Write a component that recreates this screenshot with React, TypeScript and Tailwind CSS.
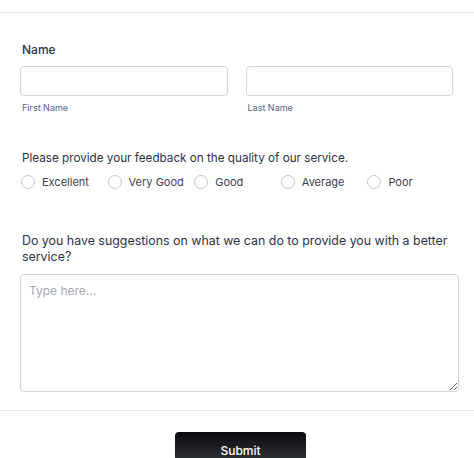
const RATINGS = ['Excellent', 'Very Good', 'Good', 'Average', 'Poor'];

export default function App() {
  return (
    <div className="w-[474px] h-[458px] overflow-hidden bg-white text-[#2c3345] font-['Inter','Liberation_Sans',sans-serif]">
      <div className="h-[12px]" />
      <div className="border-t border-[#e6e8ec]" />

      <div className="pl-[20px] pr-[15px]">
        {/* Name */}
        <div className="pt-[28px]">
          <div className="pl-[2px] text-[12px] font-medium leading-[18px]">Name</div>
          <div className="mt-[7px] flex gap-[18px] pr-[6px]">
            <div className="flex-1">
              <input className="w-full h-[30px] rounded-[4px] border border-[#d3d6dc] bg-white px-2 text-[13px] outline-none" />
              <div className="mt-[6px] pl-[2px] text-[9px] leading-[12px] text-[#57647e]">First Name</div>
            </div>
            <div className="flex-1">
              <input className="w-full h-[30px] rounded-[4px] border border-[#d3d6dc] bg-white px-2 text-[13px] outline-none" />
              <div className="mt-[6px] pl-[2px] text-[9px] leading-[12px] text-[#57647e]">Last Name</div>
            </div>
          </div>
        </div>

        {/* Feedback */}
        <div className="mt-[36px]">
          <div className="pl-[2px] text-[11.7px] leading-[16px]">Please provide your feedback on the quality of our service.</div>
          <div className="mt-[8px] grid grid-cols-5 pr-[6px]">
            {RATINGS.map((r) => (
              <label key={r} className="flex items-center gap-[7px]">
                <span className="ml-[1px] w-[14px] h-[14px] rounded-full border border-[#c3c7cf] bg-white" />
                <span className="text-[11px] leading-[16px] text-[#3a4253]">{r}</span>
              </label>
            ))}
          </div>
        </div>

        {/* Suggestions */}
        <div className="mt-[43px]">
          <div className="pl-[2px] text-[12.4px] leading-[16px]">
            Do you have suggestions on what we can do to provide you with a better service?
          </div>
          <textarea
            placeholder="Type here..."
            className="mt-[9px] block w-full h-[118px] rounded-[4px] border border-[#d3d6dc] bg-white px-[8px] py-[8px] text-[12px] leading-[16px] outline-none placeholder:text-[#a3a9b5]"
          />
        </div>
      </div>

      <div className="mt-[18px] border-t border-[#e6e8ec]" />

      <div className="flex justify-center pt-[21px]">
        <button className="ml-[7px] w-[131px] h-[36px] rounded-[4px] bg-gradient-to-b from-[#0b0c0e] to-[#3a3d42] text-white text-[12px] font-medium flex justify-center pt-[10px]">
          Submit
        </button>
      </div>
    </div>
  );
}
